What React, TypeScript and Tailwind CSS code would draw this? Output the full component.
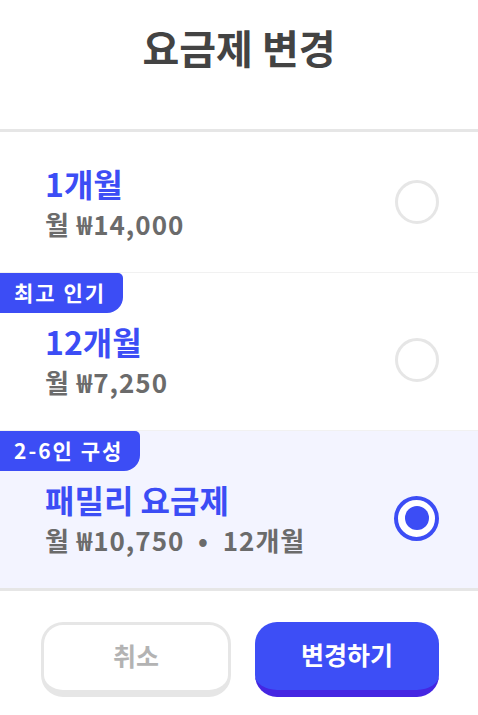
const font = { fontFamily: '"Noto Sans CJK KR", "Noto Sans", sans-serif' };

interface Plan {
  title: string;
  price: string;
  badge?: string;
  selected?: boolean;
}

const plans: Plan[] = [
  { title: "1개월", price: "월 ₩14,000" },
  { title: "12개월", price: "월 ₩7,250", badge: "최고 인기" },
  { title: "패밀리 요금제", price: "월 ₩10,750\u00a0 •\u00a0 12개월", badge: "2-6인 구성", selected: true },
];

function Radio({ on }: { on?: boolean }) {
  if (on) {
    return (
      <div className="w-[45px] h-[45px] rounded-full border-[4px] border-[#3c4df5] bg-white flex items-center justify-center shrink-0">
        <div className="w-[24px] h-[24px] rounded-full bg-[#3c4df5]" />
      </div>
    );
  }
  return <div className="w-[44px] h-[44px] rounded-full border-[3px] border-[#e6e6e6] bg-white shrink-0" />;
}

function PlanRow({ plan, last }: { plan: Plan; last: boolean }) {
  return (
    <div
      className={`relative flex items-center justify-between pl-[45px] pr-[39px] pb-[31px] ${
        plan.badge ? "pt-[48px]" : "pt-[31px]"
      } ${plan.selected ? "bg-[#f3f4ff]" : "bg-white"} ${last ? "" : "border-b border-[#f1f1f1]"}`}
    >
      {plan.badge && (
        <div className="absolute top-0 left-0 h-[40px] pl-[14px] pr-[17px] flex items-center bg-[#3c4df5] text-white text-[21px] font-bold tracking-[2px] rounded-tr-[5px] rounded-br-[16px]">
          {plan.badge}
        </div>
      )}
      <div>
        <div className="text-[32px] leading-[40px] font-bold text-[#3c4df5]">{plan.title}</div>
        <div className="mt-[4px] text-[26px] leading-[34px] font-bold text-[#6b6b6b] tracking-[1px]">{plan.price}</div>
      </div>
      <Radio on={plan.selected} />
    </div>
  );
}

export default function App() {
  return (
    <div className="w-[478px] h-[715px] bg-white overflow-hidden" style={font}>
      <div className="h-[129px] pt-[20px] text-center">
        <h1 className="text-[40px] leading-[54px] font-bold text-[#434343]">요금제 변경</h1>
      </div>
      <div className="h-[3px] bg-[#e6e6e6]" />
      <div className="border-b-[3px] border-[#e6e6e6]">
        {plans.map((p, i) => (
          <PlanRow key={p.title} plan={p} last={i === plans.length - 1} />
        ))}
      </div>
      <div className="flex gap-[24px] pl-[41px] pt-[31px]">
        <button className="w-[190px] h-[75px] pb-[3px] rounded-[22px] border-[3px] border-b-[7px] border-[#e6e6e6] bg-white text-[25px] font-bold text-[#b3b3b3]">
          취소
        </button>
        <button className="w-[184px] h-[75px] pb-[3px] rounded-[22px] border-b-[7px] border-[#4526e2] bg-[#3d4ef6] text-[25px] font-bold text-white">
          변경하기
        </button>
      </div>
    </div>
  );
}
